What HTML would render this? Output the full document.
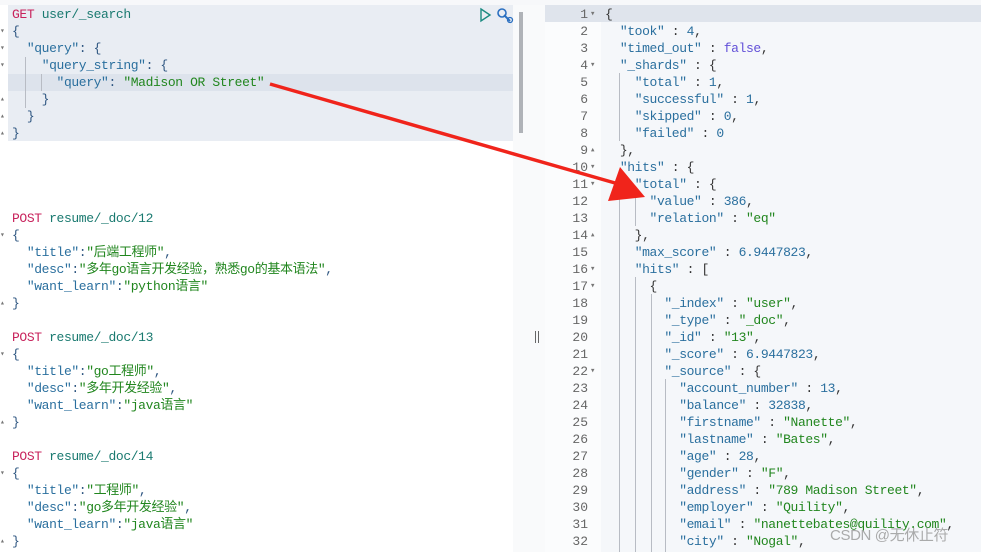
<!DOCTYPE html>
<html><head><meta charset="utf-8"><style>
body{margin:0;width:981px;height:552px;overflow:hidden;background:#fff;position:relative;font-family:"Liberation Mono","Noto Sans CJK SC",monospace;font-size:13px;letter-spacing:-0.38px}
.l{position:absolute;white-space:pre;line-height:17px;height:17px;color:#333}
.k{color:#2a6f9e}.s{color:#21861e}.n{color:#2a6f9e}.m{color:#c8235c}.p{color:#1a7a70}.f{color:#6250d8}.b{color:#2d5580}
.g{position:absolute;white-space:pre;line-height:17px;height:17px;color:#666;text-align:right;width:42px;left:546px;letter-spacing:0}
.v{position:absolute;width:1px;background:#b8bcc4}
.a{position:absolute;left:0;font-size:8px;color:#777;line-height:17px;height:17px}
</style></head><body>
<div style="position:absolute;left:0;top:0;width:981px;height:5px;background:#f7f8fa"></div>
<div style="position:absolute;left:8px;top:5px;width:505px;height:136px;background:#e9edf3"></div>
<div style="position:absolute;left:513px;top:5px;width:32px;height:547px;background:#f9fafb"></div>
<div style="position:absolute;left:8px;top:74px;width:505px;height:17px;background:#dde3ec"></div>
<div style="position:absolute;left:519px;top:12px;width:4px;height:121px;background:#b0b3b8"></div>
<div style="position:absolute;left:545px;top:5px;width:56px;height:547px;background:#fbfcfd"></div>
<div style="position:absolute;left:601px;top:5px;width:380px;height:547px;background:#f5f7fa"></div>
<div style="position:absolute;left:545px;top:5px;width:436px;height:17px;background:#dfe4ec"></div>
<div style="position:absolute;left:535px;top:331px;width:1px;height:12px;background:#666"></div>
<div style="position:absolute;left:538px;top:331px;width:1px;height:12px;background:#666"></div>
<svg style="position:absolute;left:478px;top:6px" width="40" height="18"><path d="M3 3 L12 9 L3 15 Z" fill="none" stroke="#1a8a80" stroke-width="1.4"/><circle cx="24" cy="7" r="4" fill="none" stroke="#2a6fc0" stroke-width="1.6"/><path d="M26 9 L32 15" stroke="#2a6fc0" stroke-width="2"/><circle cx="32" cy="14" r="2.5" fill="none" stroke="#2a6fc0" stroke-width="1.3"/></svg>
<div class="a" style="top:23px">▾</div><div class="a" style="top:40px">▾</div><div class="a" style="top:57px">▾</div>
<div class="a" style="top:91px">▴</div><div class="a" style="top:108px">▴</div><div class="a" style="top:125px">▴</div>
<div class="a" style="top:227px">▾</div><div class="a" style="top:295px">▴</div>
<div class="a" style="top:346px">▾</div><div class="a" style="top:414px">▴</div>
<div class="a" style="top:465px">▾</div><div class="a" style="top:533px">▴</div>
<div class="l" style="left:12px;top:6px"><span class="m">GET</span> <span class="p">user/_search</span></div>
<div class="l b" style="left:12px;top:23px">{</div>
<div class="l b" style="left:12px;top:40px">  <span class="k">"query"</span>: {</div>
<div class="l b" style="left:12px;top:57px">    <span class="k">"query_string"</span>: {</div>
<div class="l b" style="left:12px;top:74px">      <span class="k">"query"</span>: <span class="s">"Madison OR Street"</span></div>
<div class="l b" style="left:12px;top:91px">    }</div>
<div class="l b" style="left:12px;top:108px">  }</div>
<div class="l b" style="left:12px;top:125px">}</div>
<div class="v" style="left:25px;top:57px;height:51px"></div>
<div class="v" style="left:41px;top:74px;height:17px"></div>
<div class="l" style="left:12px;top:210px"><span class="m">POST</span> <span class="p">resume/_doc/12</span></div>
<div class="l b" style="left:12px;top:227px">{</div>
<div class="l b" style="left:12px;top:244px">  <span class="k">"title"</span>:<span class="s">"后端工程师"</span>,</div>
<div class="l b" style="left:12px;top:261px">  <span class="k">"desc"</span>:<span class="s">"多年go语言开发经验，熟悉go的基本语法"</span>,</div>
<div class="l b" style="left:12px;top:278px">  <span class="k">"want_learn"</span>:<span class="s">"python语言"</span></div>
<div class="l b" style="left:12px;top:295px">}</div>
<div class="l" style="left:12px;top:329px"><span class="m">POST</span> <span class="p">resume/_doc/13</span></div>
<div class="l b" style="left:12px;top:346px">{</div>
<div class="l b" style="left:12px;top:363px">  <span class="k">"title"</span>:<span class="s">"go工程师"</span>,</div>
<div class="l b" style="left:12px;top:380px">  <span class="k">"desc"</span>:<span class="s">"多年开发经验"</span>,</div>
<div class="l b" style="left:12px;top:397px">  <span class="k">"want_learn"</span>:<span class="s">"java语言"</span></div>
<div class="l b" style="left:12px;top:414px">}</div>
<div class="l" style="left:12px;top:448px"><span class="m">POST</span> <span class="p">resume/_doc/14</span></div>
<div class="l b" style="left:12px;top:465px">{</div>
<div class="l b" style="left:12px;top:482px">  <span class="k">"title"</span>:<span class="s">"工程师"</span>,</div>
<div class="l b" style="left:12px;top:499px">  <span class="k">"desc"</span>:<span class="s">"go多年开发经验"</span>,</div>
<div class="l b" style="left:12px;top:516px">  <span class="k">"want_learn"</span>:<span class="s">"java语言"</span></div>
<div class="l b" style="left:12px;top:533px">}</div>
<div id="R"></div>
<div class="v" style="left:619px;top:73px;height:68px"></div>
<div class="v" style="left:619px;top:175px;height:377px"></div>
<div class="v" style="left:635px;top:192px;height:34px"></div>
<div class="v" style="left:635px;top:277px;height:275px"></div>
<div class="v" style="left:651px;top:294px;height:258px"></div>
<div class="v" style="left:665px;top:379px;height:173px"></div>
<script>
var L=[
'{','  <span class="k">"took"</span> : <span class="n">4</span>,','  <span class="k">"timed_out"</span> : <span class="f">false</span>,','  <span class="k">"_shards"</span> : {',
'    <span class="k">"total"</span> : <span class="n">1</span>,','    <span class="k">"successful"</span> : <span class="n">1</span>,','    <span class="k">"skipped"</span> : <span class="n">0</span>,','    <span class="k">"failed"</span> : <span class="n">0</span>',
'  },','  <span class="k">"hits"</span> : {','    <span class="k">"total"</span> : {','      <span class="k">"value"</span> : <span class="n">386</span>,','      <span class="k">"relation"</span> : <span class="s">"eq"</span>',
'    },','    <span class="k">"max_score"</span> : <span class="n">6.9447823</span>,','    <span class="k">"hits"</span> : [','      {',
'        <span class="k">"_index"</span> : <span class="s">"user"</span>,','        <span class="k">"_type"</span> : <span class="s">"_doc"</span>,','        <span class="k">"_id"</span> : <span class="s">"13"</span>,','        <span class="k">"_score"</span> : <span class="n">6.9447823</span>,','        <span class="k">"_source"</span> : {',
'          <span class="k">"account_number"</span> : <span class="n">13</span>,','          <span class="k">"balance"</span> : <span class="n">32838</span>,','          <span class="k">"firstname"</span> : <span class="s">"Nanette"</span>,','          <span class="k">"lastname"</span> : <span class="s">"Bates"</span>,','          <span class="k">"age"</span> : <span class="n">28</span>,','          <span class="k">"gender"</span> : <span class="s">"F"</span>,','          <span class="k">"address"</span> : <span class="s">"789 Madison Street"</span>,','          <span class="k">"employer"</span> : <span class="s">"Quility"</span>,','          <span class="k">"email"</span> : <span class="s">"nanettebates@quility.com"</span>,','          <span class="k">"city"</span> : <span class="s">"Nogal"</span>,'];
var fold={1:'▾',4:'▾',9:'▴',10:'▾',11:'▾',14:'▴',16:'▾',17:'▾',22:'▾'};
var h='';for(var i=0;i<L.length;i++){var t=6+17*i;h+='<div class="g" style="top:'+t+'px">'+(i+1)+'</div>';if(fold[i+1])h+='<div class="l" style="left:590px;top:'+t+'px;color:#777;font-size:9px">'+fold[i+1]+'</div>';h+='<div class="l" style="left:605px;top:'+t+'px">'+L[i]+'</div>';}
document.getElementById('R').innerHTML=h;
</script>
<svg style="position:absolute;left:0;top:0" width="981" height="552"><path d="M270 84 L622 185" stroke="#f0241b" stroke-width="3.5" fill="none"/><polygon points="645,197 608,201 620,167" fill="#f0241b"/></svg>
<div style="position:absolute;left:830px;top:524px;font-family:'Liberation Sans','Noto Sans CJK SC',sans-serif;font-size:15px;color:rgba(150,150,150,.8)">CSDN @无休止符</div>
</body></html>
